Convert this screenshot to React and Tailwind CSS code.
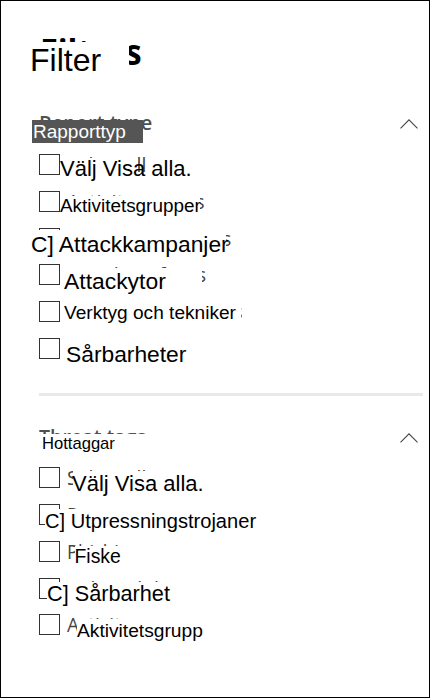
const reportTypes = [
  { source: "Select all", sourceClass: "scale-x-[0.95]", text: "Välj Visa alla.", patch: "left-[21px] top-[4px] w-[78px]", label: "left-[21px] top-[3px] text-[22px]" },
  { source: "Activity groups", sourceClass: "scale-x-[0.98]", text: "Aktivitetsgrupper", patch: "left-[21px] top-[5.2px] w-[140px]", label: "left-[21px] top-[3.2px] text-[18.9px]" },
  { source: "Attack campaigns", sourceClass: "scale-x-[0.98]", text: "C] Attackkampanjer", patch: "left-[-7px] top-[2.9px] w-[194px]", label: "left-[-8px] top-[4.6px] text-[22.8px]" },
  { source: "Attack surfaces", sourceClass: "scale-x-[0.96]", text: "Attackytor", patch: "left-[25px] top-[3.6px] w-[138px]", label: "left-[25px] top-[4.7px] text-[22.9px]" },
  { source: "Tools and techniques", sourceClass: "scale-x-[0.863]", text: "Verktyg och tekniker", patch: "left-[24px] top-[-1px] w-[178px]", label: "left-[25px] top-[0px] text-[19.1px]" },
  { source: "Vulnerabilities", sourceClass: "scale-x-[0.95]", text: "Sårbarheter", patch: "left-[24px] top-[3px] w-[150px]", label: "left-[27px] top-[4.1px] text-[22.8px]" },
];

const threatTags = [
  { source: "Select all", sourceClass: "scale-x-[0.95]", text: "Välj Visa alla.", patch: "left-[34px] top-[4px] w-[130px]", label: "left-[33px] top-[4.4px] text-[22px]" },
  { source: "Ransomware", sourceClass: "scale-x-[0.9]", text: "C] Utpressningstrojaner", patch: "left-[6px] top-[5px] w-[210px]", label: "left-[6px] top-[5.3px] text-[20.1px]" },
  { source: "Phishing", sourceClass: "scale-x-[0.9]", text: "Fiske", patch: "left-[36px] top-[5px] w-[80px]", label: "left-[35.5px] top-[3.7px] text-[19.4px]" },
  { source: "Vulnerability", sourceClass: "scale-x-[0.95]", text: "C] Sårbarhet", patch: "left-[8px] top-[4px] w-[150px]", label: "left-[8px] top-[4.6px] text-[21.7px]" },
  { source: "Activity group", sourceClass: "scale-x-[0.93]", text: "Aktivitetsgrupp", patch: "left-[38px] top-[5px] w-[150px]", label: "left-[38px] top-[4.6px] text-[19.2px]" },
];

function Chevron() {
  return (
    <svg className="h-[12px] w-[20px]" viewBox="0 0 20 12" fill="none" stroke="#444" strokeWidth="1.1">
      <path d="M1.5 10.3 10 1.8l8.5 8.5" />
    </svg>
  );
}

function Option({ item }) {
  return (
    <li className="relative flex h-[36.8px] items-start">
      <span className="size-[21px] shrink-0 border border-[#333] bg-white" />
      <span className={`ml-[7px] origin-left whitespace-nowrap font-['Open_Sans',sans-serif] text-[20.5px] leading-[21px] text-[#444] ${item.sourceClass}`}>
        {item.source}
      </span>
      <span className={`absolute h-[26px] bg-white ${item.patch}`} />
      <span className={`absolute whitespace-nowrap leading-[24px] text-black ${item.label}`}>{item.text}</span>
    </li>
  );
}

export default function App() {
  return (
    <main className="flex h-[698px] w-[430px] flex-col overflow-hidden border border-black bg-white pl-[38px] pr-[6px] font-['Liberation_Sans',Arial,sans-serif]">
      <header className="relative mt-[30px] h-[50px]">
        <h1 className="origin-left scale-x-[0.9] whitespace-nowrap pl-px font-['Open_Sans',sans-serif] text-[36px] font-bold leading-[42px] text-black">Filters</h1>
        <span className="absolute left-[-9px] top-[11px] h-[36px] w-[99px] bg-white" />
        <span className="absolute left-[-9px] top-[11px] whitespace-nowrap text-[32px] leading-[36px]">Filter</span>
      </header>

      <section className="mt-[32px]">
        <div className="relative flex h-[41px] items-start justify-between pr-[4px]">
          <h2 className="origin-left whitespace-nowrap font-['Open_Sans',sans-serif] text-[20px] font-semibold leading-[20px] text-[#505050]">Report type</h2>
          <span className="mt-[5px] flex"><Chevron /></span>
          <span className="absolute left-[-7px] top-[7px] h-[23px] w-[111px] whitespace-nowrap bg-[#555] pl-px text-[19px] leading-[23px] text-white">Rapporttyp</span>
        </div>
        <ul>
          {reportTypes.map((item) => <Option key={item.source} item={item} />)}
        </ul>
      </section>

      <div className="mt-[18px] h-[3px] shrink-0 bg-[#e9e9e9]" />

      <section className="mt-[31px]">
        <div className="relative flex h-[40.4px] items-start justify-between pr-[4px]">
          <h2 className="origin-left scale-x-[0.98] whitespace-nowrap font-['Open_Sans',sans-serif] text-[20px] font-semibold leading-[20px] text-[#505050]">Threat tags</h2>
          <span className="mt-[5px] flex"><Chevron /></span>
          <span className="absolute left-0 top-[7px] h-[22px] w-[115px] bg-white" />
          <span className="absolute left-[3px] top-[5px] whitespace-nowrap text-[16.6px] leading-[24px]">Hottaggar</span>
        </div>
        <ul>
          {threatTags.map((item) => <Option key={item.source} item={item} />)}
        </ul>
      </section>
    </main>
  );
}
